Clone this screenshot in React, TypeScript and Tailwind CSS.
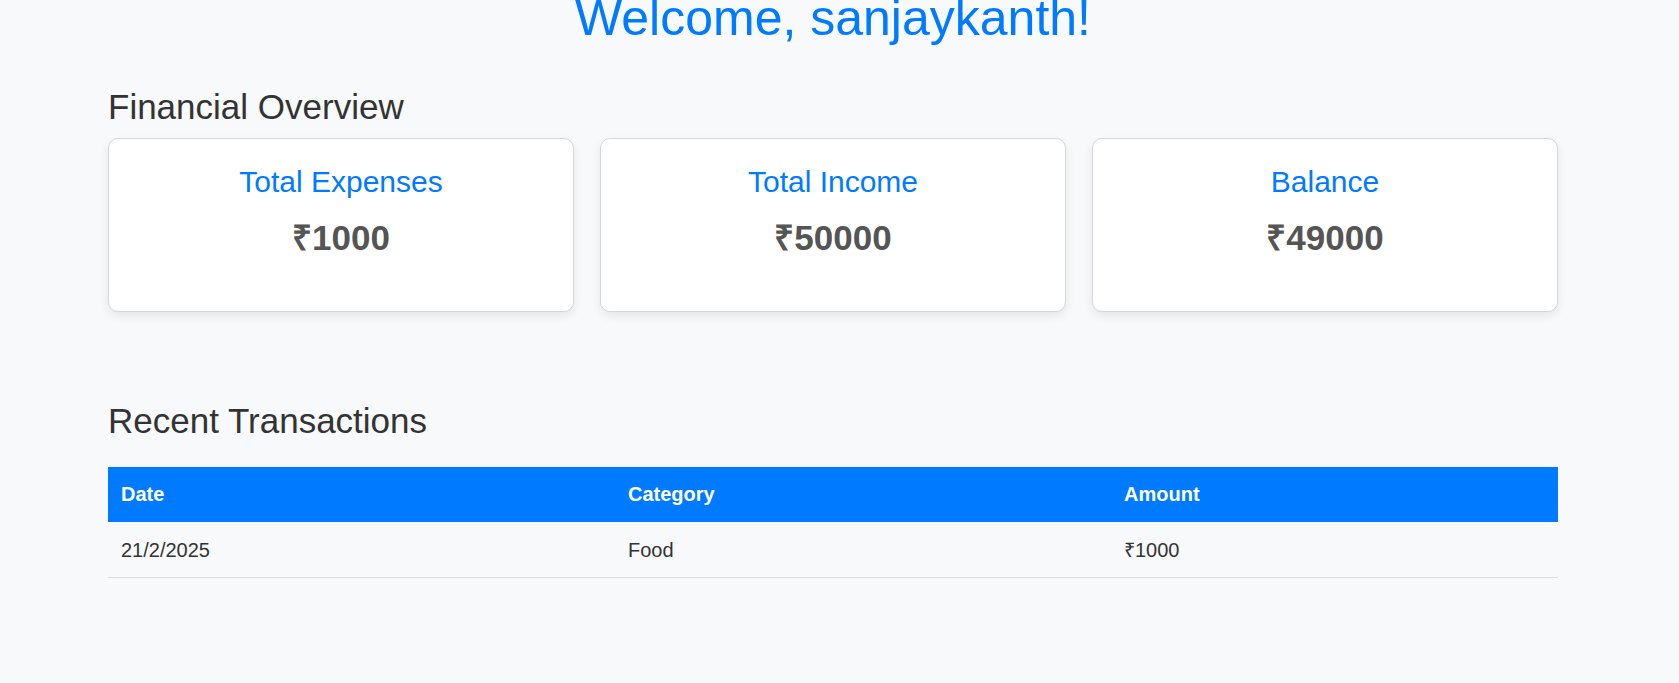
const cards = [
  { title: 'Total Expenses', amount: '₹1000' },
  { title: 'Total Income', amount: '₹50000' },
  { title: 'Balance', amount: '₹49000' },
];

const transactions = [{ date: '21/2/2025', category: 'Food', amount: '₹1000' }];

export default function App() {
  return (
    <div className="min-h-screen bg-[#f8f9fa] font-['Liberation_Sans',Arial,sans-serif] text-[#333] overflow-hidden">
      <div className="ml-[108px] w-[1450px]">
        <h1 className="-mt-[11px] text-center text-[50px] leading-[58px] text-[#007bff]">Welcome, sanjaykanth!</h1>

        {/* Financial overview */}
        <h2 className="mt-[40px] text-[35px] leading-[40px] text-[#333]">Financial Overview</h2>
        <div className="mt-[11px] grid grid-cols-3 gap-[26px]">
          {cards.map((c) => (
            <div
              key={c.title}
              className="flex flex-col items-center rounded-[10px] border border-[#d6d6d6] bg-white pt-[26px] pb-[53px] shadow-[0_4px_10px_rgba(0,0,0,0.08)]"
            >
              <h3 className="text-[30px] leading-[34px] text-[#007bff]">{c.title}</h3>
              <p className="mt-[19px] text-[35px] font-bold leading-[40px] text-[#555]">{c.amount}</p>
            </div>
          ))}
        </div>

        {/* Recent transactions */}
        <h2 className="mt-[89px] text-[35px] leading-[40px] text-[#333]">Recent Transactions</h2>
        <table className="mt-[26px] w-full border-collapse text-left text-[20px] leading-[23px]">
          <thead>
            <tr className="bg-[#007bff] text-white">
              <th className="w-[507px] px-[13px] py-[16px] font-bold">Date</th>
              <th className="w-[496px] px-[13px] py-[16px] font-bold">Category</th>
              <th className="px-[13px] py-[16px] font-bold">Amount</th>
            </tr>
          </thead>
          <tbody>
            {transactions.map((t, i) => (
              <tr key={i} className="border-b border-[#dddddd]">
                <td className="px-[13px] pt-[17px] pb-[15px]">{t.date}</td>
                <td className="px-[13px] pt-[17px] pb-[15px]">{t.category}</td>
                <td className="px-[13px] pt-[17px] pb-[15px]">{t.amount}</td>
              </tr>
            ))}
          </tbody>
        </table>
      </div>
    </div>
  );
}
